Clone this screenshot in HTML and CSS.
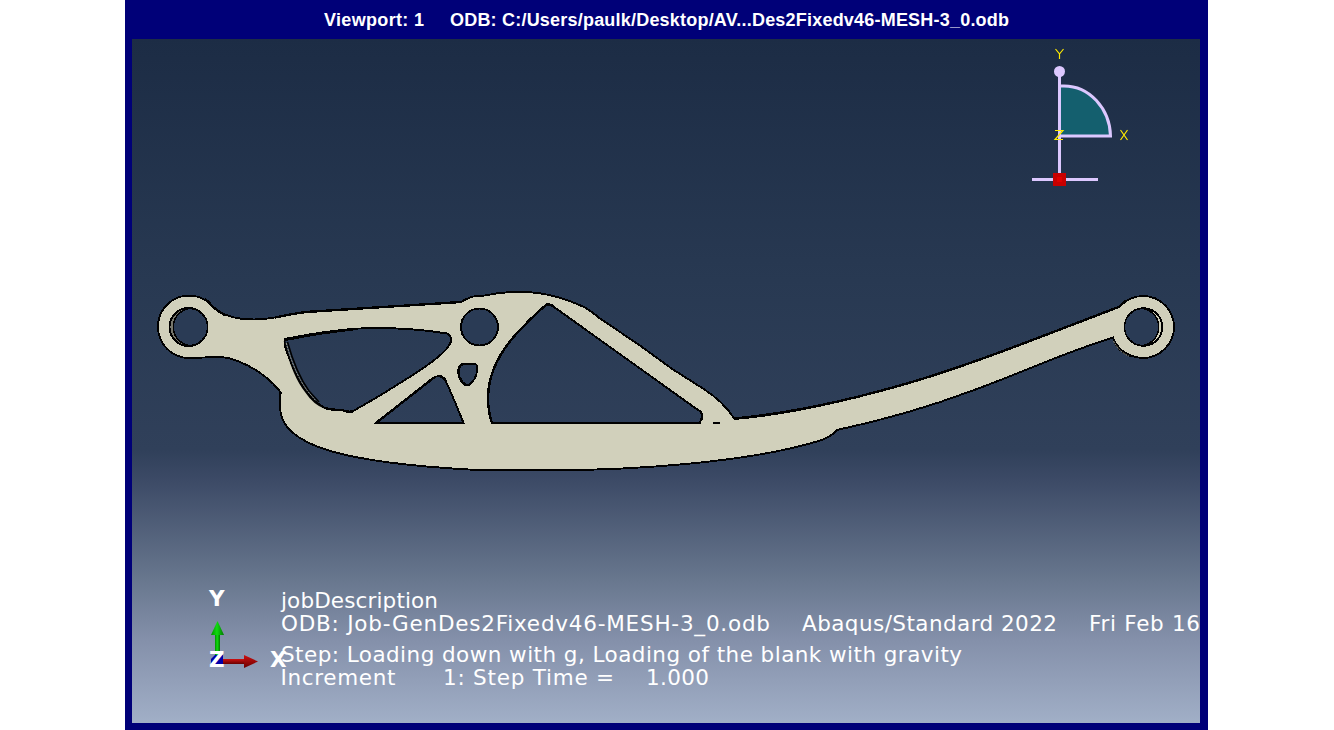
FILE: index.html
```
<!DOCTYPE html>
<html lang="en">
<head>
<meta charset="utf-8">
<title>Viewport: 1</title>
<link rel="stylesheet" href="styles.css">
</head>
<body>
<main class="window">
  <header class="titlebar"><svg class="title" width="700" height="39" viewBox="316 0 700 39">
    <text x="324" y="26" textLength="100">Viewport: 1</text>
    <text x="450" y="26" textLength="559">ODB: C:/Users/paulk/Desktop/AV...Des2Fixedv46-MESH-3_0.odb</text>
  </svg></header>
  <svg class="viewport" viewBox="132 39 1068 684">
    <defs>
      <linearGradient id="green" x1="0" x2="1" y1="0" y2="0"><stop offset="0" stop-color="#009000"/><stop offset=".45" stop-color="#10dc10"/><stop offset="1" stop-color="#007800"/></linearGradient>
      <linearGradient id="red" x1="0" x2="0" y1="0" y2="1"><stop offset="0" stop-color="#d01010"/><stop offset="1" stop-color="#680000"/></linearGradient>
    </defs>

    <!-- part body with through holes -->
    <g class="part">
      <path class="body" d="M205 300 Q209 302 212 306 C221 315 234 319.500 254 319.500 C275 319.500 288 313.500 306 312 C350 309 410 306 461 302 Q469 297 476 296 L485 295.500 Q500 292 516 292 C541 291 565 298 585 307.500 Q591 311 600 318.500 L640 345.500 L673 369.500 L703 388.500 Q724 402 734.500 419 C793 414 862 397 917 380.500 C975 363 1040 337 1120 306.500 Q1129 296 1143.500 296 A31 31 0 0 1 1174 327 A31 31 0 0 1 1143 358 Q1122 357 1113.500 339 L1113 337.500 C1060 354 1014 376 970 391.500 C926 408 883 420 837 430 Q832 437 817 441.500 C742 464 621 470 563 470 L477 470 C420 467 368 462 330 451 C297 441 280 427 280 407 L280 394 L281 393 C272 380 255 368 240 362 Q229 357 218 357 L189 358 A31 31 0 0 1 158 327 A31 31 0 0 1 205 300 Z
        M284.500 339 C315 333 345 328 375 328 C403 328 432 331 447 333.500 Q451 335 451.500 340 C449 351 431 363 412 375.500 L380 395.500 L355 410 Q350 413 342 410 Q332 410 325 408 Q314 402 306 391 C297 378 289 359 284.500 345 Z
        M376 423 L434 377.500 Q438 375 443 377.500 Q446 379 463.500 423 Z
        M492 423 Q488 412 488 397 Q489 363 518 332 Q530 319 543.500 307 L547 304.500 Q551 304 554 307 L698 410 Q702.500 412 702 417 L700 423 Z
        M463 364 H473 Q477.500 363 477.500 369 Q476 381 468 385.500 Q460 385 458.500 373 Q458 366 463 364 Z"/>
      <path class="heavy" d="M205 299 Q209 302 212 306 Q217 311 225 315 M275 317.500 Q290 314 306 312 L461 302 M734.500 418.500 C793 413 862 397 917 380.500 C975 363 1040 337 1120 306.500 M284.500 340 Q325 332 353 329.500 M354 411 Q350 413 342 410 Q332 410 325 408 M376 423 L434 377.500 M438 376 Q443 376 446 381 M492 423 Q488 412 488 397 Q489 363 518 332 Q530 319 543.500 307 L547 304.500 Q551 304 554 307 M702 413 V420 M459 376 Q457 366 463 364 M460 377 Q462 384 467 385"/>
      <path class="flat" d="M375 423 H464 M491 423 H701 M713 422.500 H720"/>
      <path class="hair" d="M284.500 341 Q293 376 306 392 Q314 404 325 408 M287.500 342 Q296 373 309 391 L319 402"/>
      <path class="light" d="M286.200 343 Q294.500 374 307.500 391 L316 401"/>
    </g>
    <g class="bore">
      <circle class="grey-fill" cx="188.500" cy="327" r="19"/>
      <path class="inner" d="M189 308.500 A18.500 18.500 0 0 1 189 345.500 C168 341 168 313 189 308.500 Z"/>
      <circle cx="479.500" cy="327" r="18.500"/>
      <circle class="cream-fill" cx="1143.500" cy="327" r="18.800"/>
      <path class="inner" d="M1143 308.500 A18.500 18.500 0 0 0 1143 345.500 C1164 341 1164 313 1143 308.500 Z"/>
      <path class="thin" d="M1113 338 Q1116 351 1131 356.500 M1117 308 L1125 301"/>
    </g>
    <path class="light" d="M1113.500 341 Q1119 352 1129 356"/>

    <!-- view compass -->
    <g class="compass">
      <path class="sector" d="M1060.500 86 C1090 84 1110 110 1110.500 136 H1060.500"/>
      <path d="M1059.500 72 V178 M1032 179.500 H1098"/>
      <circle cx="1059.500" cy="71.500" r="5.500"/>
      <rect x="1053" y="173" width="13" height="13" fill="#c80000"/>
      <rect x="1057" y="177" width="5" height="5" fill="#e00000"/>
      <g class="axis-lines"><path d="M1055.500 49 L1059.500 54 V59 M1059.500 54 L1063.500 49 M1120.500 130 L1127.500 140 M1127.500 130 L1120.500 140 M1055 130.500 H1063 L1055 139.500 H1063"/></g>
    </g>

    <!-- coordinate triad -->
    <g class="triad">
      <rect x="215" y="633" width="5" height="27" fill="url(#green)"/>
      <path d="M217.500 621 L224 635 L211 635 Z" fill="url(#green)"/>
      <rect x="223" y="659" width="22" height="5" fill="url(#red)"/>
      <path d="M244 655 L258 661.500 L244 668 Z" fill="url(#red)"/>
      <path d="M211 659 L215 655 H223 V664 H211 Z" fill="#0000a8"/>
      <text x="209" y="606" textLength="16">Y</text>
      <text x="209" y="667" textLength="15">Z</text>
      <text x="270" y="667" textLength="17">X</text>
    </g>

    <g class="state">
      <text x="281" y="608" textLength="157">jobDescription</text>
      <text x="281" y="631" textLength="489">ODB: Job-GenDes2Fixedv46-MESH-3_0.odb</text>
      <text x="802" y="631" textLength="255">Abaqus/Standard 2022</text>
      <text x="1089" y="631" textLength="111">Fri Feb 16</text>
      <text x="281" y="662" textLength="681">Step: Loading down with g, Loading of the blank with gravity</text>
      <text x="280.500" y="685" textLength="115">Increment</text>
      <text x="443" y="685" textLength="171">1: Step Time =</text>
      <text x="646" y="685" textLength="63">1.000</text>
    </g>
  </svg>
</main>
</body>
</html>
```
FILE: styles.css
```
body { margin: 0; background: #fff; overflow: hidden; }
.window {
  box-sizing: border-box;
  width: 1083px;
  height: 730px;
  margin-left: 125px;
  padding: 0 8px 7px 7px;
  background: #000078;
  display: flex;
  flex-direction: column;
}
.titlebar { height: 39px; display: flex; justify-content: center; }
.title { font: bold 18px "Liberation Sans", Arial, sans-serif; fill: #fff; flex: none; }
.viewport {
  display: block;
  width: 1068px;
  height: 684px;
  background: linear-gradient(#1c2c45 0, #283952 241px, #30405a 411px, #3c4a66 441px, #68778e 541px, #8490aa 601px, #a1afc7 684px);
}
.body { fill: #d1d0bb; fill-rule: evenodd; stroke: #000; stroke-width: 1.9; shape-rendering: crispEdges; }
.heavy { fill: none; stroke: #000; stroke-width: 2.4; shape-rendering: crispEdges; }
.flat { fill: none; stroke: #000; stroke-width: 2; shape-rendering: crispEdges; }
.hair { fill: none; stroke: #000; stroke-width: 1.6; }
.light { fill: none; stroke: #9c9c8c; stroke-width: 1; stroke-dasharray: 2 1; }
.bore { fill: #2a3b55; stroke: #000; stroke-width: 1.9; shape-rendering: crispEdges; }
.bore .grey-fill { fill: #77776c; }
.bore .cream-fill { fill: #d1d0bb; }
.bore .inner { stroke-width: 1.5; }
.bore .thin { fill: none; stroke-width: 1.4; }
.compass { fill: #dcc8ff; stroke: #dcc8ff; stroke-width: 3; }
.compass circle, .compass rect { stroke: none; }
.compass .sector { fill: #145f6e; }
.axis-lines path { fill: none; stroke: #ffeb00; stroke-width: 1.2; }
.triad { font: bold 21.500px "DejaVu Sans", Verdana, sans-serif; }
.triad text { fill: #fff; }
.state { font: 21.500px "DejaVu Sans", Verdana, sans-serif; fill: #fff; }
```
